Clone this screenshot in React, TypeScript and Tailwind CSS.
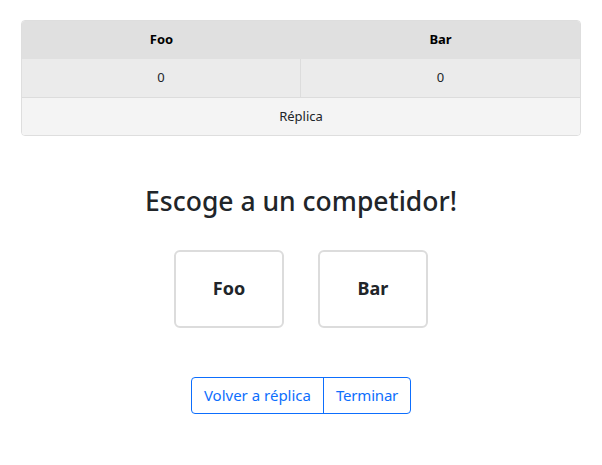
const font = { fontFamily: '"Noto Sans", "Open Sans", sans-serif' };

const App = () => {
  return (
    <div className="min-h-[465px] bg-white text-[#212529]" style={font}>
      <div className="px-[21px] pt-[20px]">
        <div className="rounded-[4px] border border-[#dedede] overflow-hidden text-[14px]">
          <div className="grid grid-cols-2 bg-[#e0e0e0] h-[38px] items-center font-bold text-black text-[13px]">
            <div className="text-center">Foo</div>
            <div className="text-center">Bar</div>
          </div>
          <div className="grid grid-cols-2 bg-[#ebebeb] h-[38px] text-[13px]">
            <div className="flex items-center justify-center border-r border-[#dcdcdc]">0</div>
            <div className="flex items-center justify-center">0</div>
          </div>
          <div className="bg-[#f4f4f4] h-[38px] flex items-center justify-center border-t border-[#dcdcdc] text-[13px]">
            Réplica
          </div>
        </div>
      </div>

      <h3 className="text-center text-[26.5px] font-medium mt-[50px] leading-[1.2]">
        Escoge a un competidor!
      </h3>

      <div className="flex justify-center gap-[34px] mt-[32px]">
        <button className="w-[110px] h-[78px] rounded-[6px] border-2 border-[#dcdcdc] bg-white font-bold text-[18px]">
          Foo
        </button>
        <button className="w-[110px] h-[78px] rounded-[6px] border-2 border-[#dcdcdc] bg-white font-bold text-[18px]">
          Bar
        </button>
      </div>

      <div className="flex justify-center mt-[49px]">
        <div className="flex h-[37px] border border-[#0d6efd] rounded-[4px] text-[#0d6efd] text-[15px]">
          <button className="px-[12px] border-r border-[#0d6efd]">Volver a réplica</button>
          <button className="px-[12px] tracking-[-0.2px]">Terminar</button>
        </div>
      </div>
    </div>
  );
};

export default App;
